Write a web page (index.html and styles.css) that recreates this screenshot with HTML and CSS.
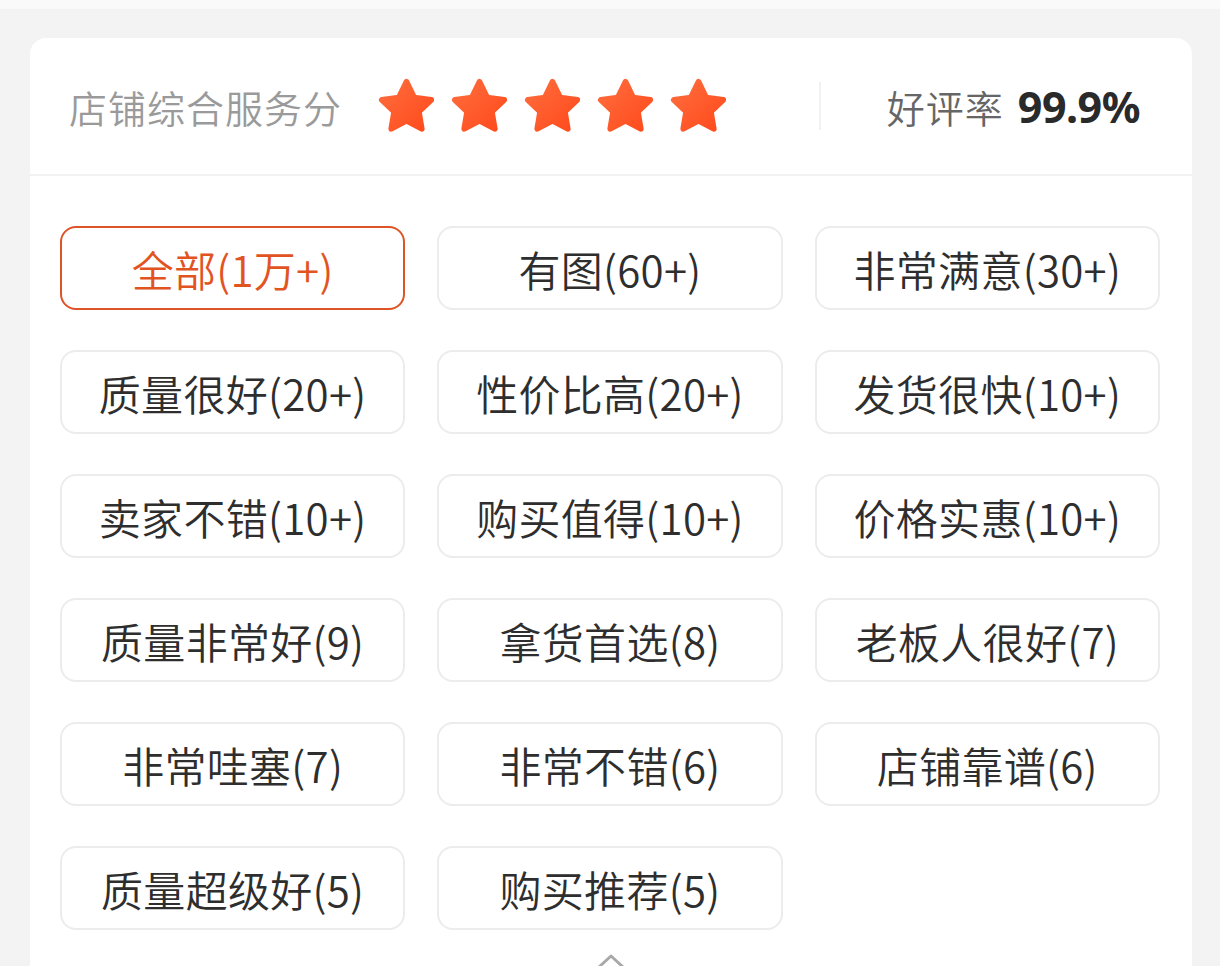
FILE: index.html
```html
<!DOCTYPE html>
<html lang="zh-CN">

<head>
    <meta charset="UTF-8">
    <meta name="viewport" content="width=device-width, initial-scale=1.0">
    <title>店铺评价</title>
    <link rel="stylesheet" href="styles.css">
</head>

<body>
    <div class="top-strip"></div>
    <div class="card">
        <!-- 店铺评分 -->
        <div class="score-bar">
            <span class="score-label">店铺综合服务分</span>
            <div class="stars">
                <svg class="star" viewBox="0 0 24 24"><use href="#star-shape"></use></svg>
                <svg class="star" viewBox="0 0 24 24"><use href="#star-shape"></use></svg>
                <svg class="star" viewBox="0 0 24 24"><use href="#star-shape"></use></svg>
                <svg class="star" viewBox="0 0 24 24"><use href="#star-shape"></use></svg>
                <svg class="star" viewBox="0 0 24 24"><use href="#star-shape"></use></svg>
            </div>
            <div class="split"></div>
            <div class="rate">
                <span class="rate-label">好评率</span>
                <span class="rate-value">99.9%</span>
            </div>
        </div>

        <!-- 评价标签 -->
        <div class="tags">
            <div class="tag active">全部(1万+)</div>
            <div class="tag">有图(60+)</div>
            <div class="tag">非常满意(30+)</div>
            <div class="tag">质量很好(20+)</div>
            <div class="tag">性价比高(20+)</div>
            <div class="tag">发货很快(10+)</div>
            <div class="tag">卖家不错(10+)</div>
            <div class="tag">购买值得(10+)</div>
            <div class="tag">价格实惠(10+)</div>
            <div class="tag">质量非常好(9)</div>
            <div class="tag">拿货首选(8)</div>
            <div class="tag">老板人很好(7)</div>
            <div class="tag">非常哇塞(7)</div>
            <div class="tag">非常不错(6)</div>
            <div class="tag">店铺靠谱(6)</div>
            <div class="tag">质量超级好(5)</div>
            <div class="tag">购买推荐(5)</div>
        </div>

        <div class="fold">
            <svg width="30" height="18" viewBox="0 0 30 18">
                <polyline points="3,15 15,4 27,15" fill="none" stroke="#a8a8a8" stroke-width="3" stroke-linecap="round" stroke-linejoin="round" />
            </svg>
        </div>
    </div>

    <svg width="0" height="0" class="defs">
        <defs>
            <linearGradient id="star-fill" x1="0" y1="0" x2="1" y2="1">
                <stop offset="0" stop-color="#ff6d3d" />
                <stop offset="1" stop-color="#ff4a1c" />
            </linearGradient>
            <polygon id="star-shape"
                points="12,2.6 14.9,8.6 21.4,9.5 16.7,14 17.8,20.5 12,17.4 6.2,20.5 7.3,14 2.6,9.5 9.1,8.6"
                fill="url(#star-fill)" stroke="url(#star-fill)" stroke-width="2.2" stroke-linejoin="round" />
        </defs>
    </svg>
</body>

</html>
```

FILE: styles.css
```css
body {
    margin: 0;
    background-color: #f3f3f3;
    font-family: "Noto Sans CJK SC", "Noto Sans", sans-serif;
    overflow: hidden;
}

.top-strip {
    height: 9px;
    background-color: #fafafa;
}

.card {
    margin: 29px 28px 0 30px;
    background-color: #fff;
    border-radius: 16px;
    height: 960px;
}

.score-bar {
    display: flex;
    align-items: center;
    height: 136px;
    padding: 0 52px 0 39px;
    border-bottom: 2px solid #f2f2f2;
}

.score-label {
    font-size: 38px;
    font-weight: 350;
    color: #9a9a9a;
    letter-spacing: 1px;
}

.stars {
    display: flex;
    gap: 10px;
    margin-left: 33px;
}

.star {
    width: 63px;
    height: 63px;
}

.split {
    width: 2px;
    height: 48px;
    background-color: #f2f2f2;
    margin-left: auto;
}

.rate {
    display: flex;
    align-items: center;
    margin-left: 66px;
}

.rate-label {
    font-size: 38px;
    font-weight: 350;
    color: #666;
    letter-spacing: 1px;
}

.rate-value {
    font-family: "Noto Sans", sans-serif;
    font-weight: bold;
    font-size: 43px;
    color: #2a2a2a;
    margin-left: 14px;
    letter-spacing: -0.5px;
}

.tags {
    display: grid;
    grid-template-columns: repeat(3, 1fr);
    column-gap: 32px;
    row-gap: 40px;
    padding: 50px 32px 0 30px;
}

.tag {
    height: 80px;
    border: 2px solid #ececec;
    border-radius: 16px;
    display: flex;
    align-items: center;
    justify-content: center;
    font-size: 42px;
    font-weight: 350;
    letter-spacing: 0.3px;
    color: #2e2e2e;
}

.tag.active {
    border-color: #dd5426;
    color: #e2541f;
}

.fold {
    display: flex;
    justify-content: center;
    padding-top: 22px;
}

.defs {
    position: absolute;
}
```
